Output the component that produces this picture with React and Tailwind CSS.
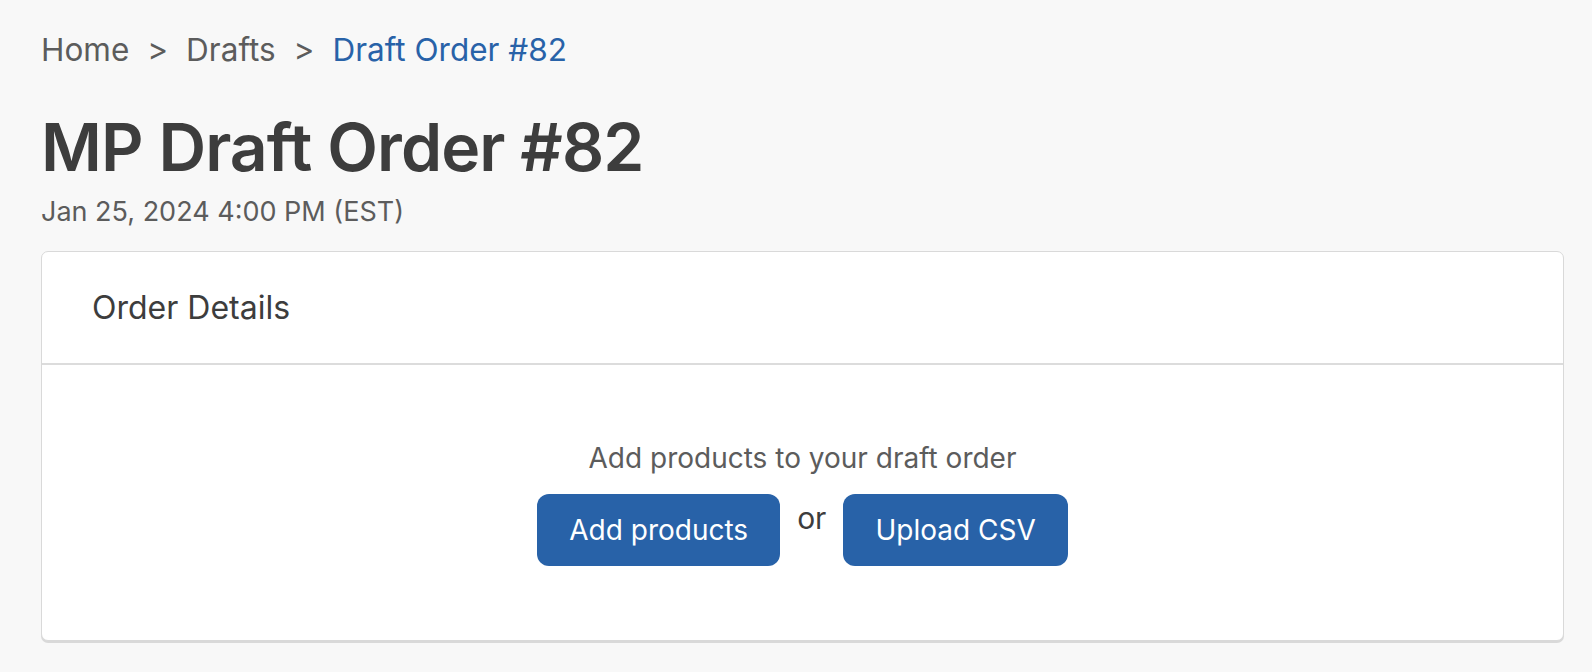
import React from "react";

const App = () => {
  return (
    <div
      className="min-h-screen bg-[#f8f8f8] pl-[41px] pr-[28px] pt-[31px] pb-[30px] text-[#3d3d3d]"
      style={{ fontFamily: "Inter, 'Noto Sans', sans-serif" }}
    >
      {/* breadcrumb */}
      <nav className="flex items-center gap-[18px] text-[31.5px] leading-[38px] text-[#5c5c5c]">
        <span>Home</span>
        <span>&gt;</span>
        <span>Drafts</span>
        <span>&gt;</span>
        <span className="text-[#2862a8]">Draft Order #82</span>
      </nav>

      <h1 className="mt-[35px] text-[66px] leading-[86px] font-semibold tracking-[-0.9px] text-[#3d3d3d]">
        MP Draft Order #82
      </h1>
      <p className="mt-[5px] text-[27px] leading-[34px] text-[#5c5c5c]">
        Jan 25, 2024 4:00 PM (EST)
      </p>

      <div className="mt-[22px] rounded-[7px] border border-[#d9d9d9] bg-white shadow-[0_2px_0_#d9d9d9]">
        <div className="flex h-[113px] items-center border-b-2 border-[#dcdcdc] px-[50px]">
          <h2 className="text-[32px] text-[#3d3d3d]">Order Details</h2>
        </div>
        <div className="flex flex-col items-center pt-[76px] pb-[74px]">
          <p className="text-[28px] leading-[34px] text-[#5c5c5c]">
            Add products to your draft order
          </p>
          <div className="mt-[19px] flex items-center gap-[17px]">
            <button className="h-[72px] rounded-[12px] bg-[#2862a8] px-[32px] text-[28px] text-white">
              Add products
            </button>
            <span className="mb-[24px] text-[30px] text-[#3d3d3d]">or</span>
            <button className="h-[72px] rounded-[12px] bg-[#2862a8] px-[32px] text-[28px] text-white">
              Upload CSV
            </button>
          </div>
        </div>
      </div>
    </div>
  );
};

export default App;
